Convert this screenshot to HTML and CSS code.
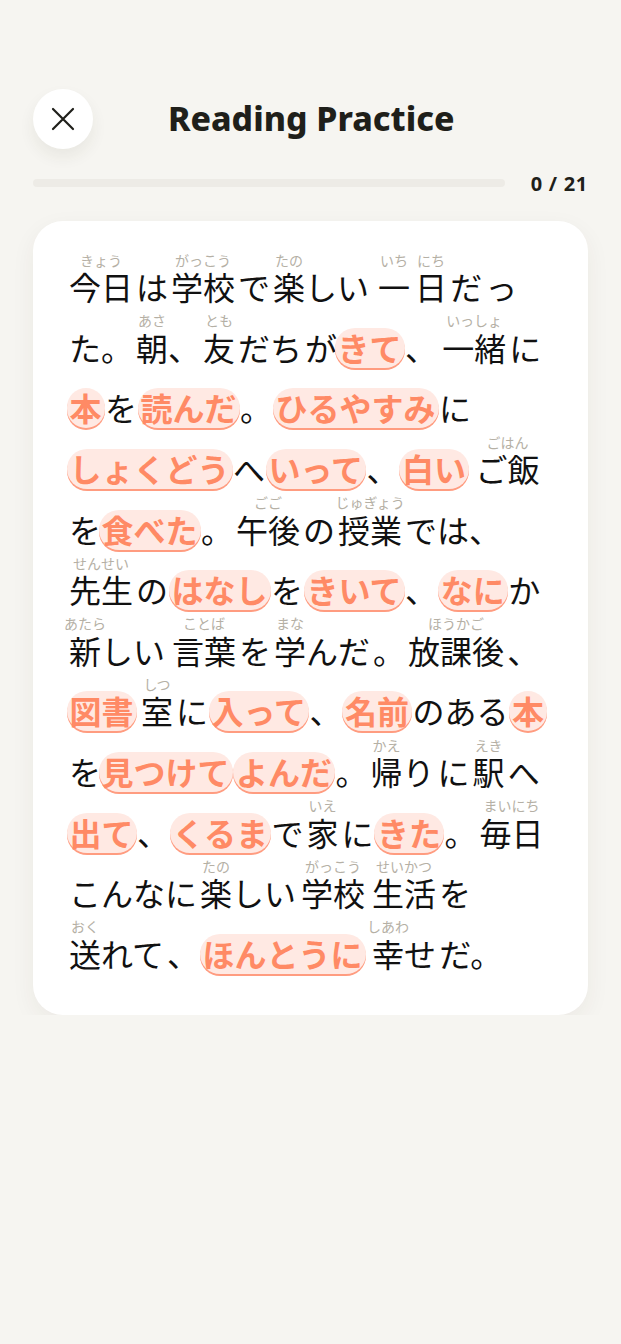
FILE: index.html
```html
<!DOCTYPE html>
<html lang="ja">
<head>
  <meta charset="utf-8">
  <title>Reading Practice</title>
  <link rel="stylesheet" href="styles.css">
</head>
<body>
<div class="page">
  <div class="header">
    <button class="closeBtn">
      <svg width="24" height="24" viewBox="0 0 24 24"><path d="M2 2L22 22M22 2L2 22" fill="none" stroke="#1f1f1a" stroke-width="2.2" stroke-linecap="round"/></svg>
    </button>
    <h1>Reading Practice</h1>
  </div>

  <div class="progress">
    <div class="track"></div>
    <span class="count">0 / 21</span>
  </div>

  <div class="card">
    <div class="line">
      <span class="w"><i>きょう</i>今日</span><span class="w">は</span><span class="w"><i>がっこう</i>学校</span><span class="w">で</span><span class="w"><b><i>たの</i>楽</b>しい</span><span class="w wide"><i>いち</i>一</span><span class="w near"><i>にち</i>日</span><span class="w">だ</span><span class="w">っ</span>
    </div>
    <div class="line">
      <span class="w">た。</span><span class="w"><b><i>あさ</i>朝</b>、</span><span class="w"><i>とも</i>友</span><span class="w">だち</span><span class="w">が</span><span class="w hl tight">きて</span><span class="w">、</span><span class="w near"><i>いっしょ</i>一緒</span><span class="w">に</span>
    </div>
    <div class="line">
      <span class="w hl">本</span><span class="w">を</span><span class="w hl">読んだ</span><span class="w">。</span><span class="w hl">ひるやすみ</span><span class="w">に</span>
    </div>
    <div class="line">
      <span class="w hl">しょくどう</span><span class="w">へ</span><span class="w hl">いって</span><span class="w">、</span><span class="w hl">白い</span><span class="w wide"><i>ごはん</i>ご飯</span>
    </div>
    <div class="line">
      <span class="w">を</span><span class="w hl tight">食べた</span><span class="w">。</span><span class="w"><i>ごご</i>午後</span><span class="w">の</span><span class="w"><i>じゅぎょう</i>授業</span><span class="w">では、</span>
    </div>
    <div class="line">
      <span class="w"><i>せんせい</i>先生</span><span class="w">の</span><span class="w hl">はなし</span><span class="w">を</span><span class="w hl">きいて</span><span class="w">、</span><span class="w hl">なに</span><span class="w">か</span>
    </div>
    <div class="line">
      <span class="w"><b><i>あたら</i>新</b>しい</span><span class="w mid"><i>ことば</i>言葉</span><span class="w">を</span><span class="w"><b><i>まな</i>学</b>んだ</span><span class="w">。</span><span class="w"><i>ほうかご</i>放課後</span><span class="w">、</span>
    </div>
    <div class="line">
      <span class="w hl">図書</span><span class="w mid"><i>しつ</i>室</span><span class="w">に</span><span class="w hl">入って</span><span class="w">、</span><span class="w hl">名前</span><span class="w">のある</span><span class="w hl">本</span>
    </div>
    <div class="line">
      <span class="w">を</span><span class="w hl tight">見つけて</span><span class="w hl">よんだ</span><span class="w">。</span><span class="w"><b><i>かえ</i>帰</b>り</span><span class="w">に</span><span class="w"><i>えき</i>駅</span><span class="w">へ</span>
    </div>
    <div class="line">
      <span class="w hl">出て</span><span class="w">、</span><span class="w hl">くるま</span><span class="w">で</span><span class="w"><i>いえ</i>家</span><span class="w">に</span><span class="w hl">きた</span><span class="w">。</span><span class="w"><i>まいにち</i>毎日</span>
    </div>
    <div class="line">
      <span class="w">こんなに</span><span class="w"><b><i>たの</i>楽</b>しい</span><span class="w near"><i>がっこう</i>学校</span><span class="w mid"><i>せいかつ</i>生活</span><span class="w">を</span>
    </div>
    <div class="line">
      <span class="w"><b><i>おく</i>送</b>れて</span><span class="w">、</span><span class="w hl">ほんとうに</span><span class="w wide"><b><i>しあわ</i>幸</b>せ</span><span class="w">だ。</span>
    </div>
  </div>
</div>
</body>
</html>
```

FILE: styles.css
```css
* {
  box-sizing: border-box;
}

body {
  margin: 0;
  background: #f6f5f1;
  font-family: "Noto Sans", "Noto Sans CJK JP", sans-serif;
  color: #1f1f1a;
}

.page {
  padding: 89px 33px 0 33px;
}

.header {
  display: flex;
  align-items: center;
  height: 60px;
}

.closeBtn {
  width: 60px;
  height: 60px;
  border: none;
  border-radius: 50%;
  background: white;
  box-shadow: 0 8px 16px rgba(60, 50, 30, 0.07);
  display: flex;
  align-items: center;
  justify-content: center;
  padding: 0;
}

h1 {
  margin: 0 0 2px 75px;
  font-size: 33.8px;
  font-weight: 800;
  line-height: 58px;
  white-space: nowrap;
}

.progress {
  display: flex;
  align-items: center;
  margin-top: 30px;
  height: 8px;
}

.track {
  flex: 1;
  height: 8px;
  border-radius: 4px;
  background: #edebe6;
}

.count {
  width: 83px;
  text-align: right;
  font-size: 20px;
  font-weight: 700;
  letter-spacing: 0.7px;
}

.card {
  margin-top: 34px;
  height: 794px;
  padding: 36px 0 0 36px;
  border-radius: 30px;
  background: white;
  box-shadow: 0 8px 24px rgba(60, 50, 30, 0.06);
  font-family: "Noto Sans CJK JP", sans-serif;
}

.line {
  display: flex;
  gap: 3px;
  height: 60.6px;
  align-items: center;
  font-size: 32px;
  color: #111;
}

.w {
  position: relative;
  white-space: nowrap;
  line-height: 38px;
  padding-bottom: 2px;
}

.w b {
  display: inline-block;
  position: relative;
  font-weight: 400;
}

.wide {
  margin-left: 6px;
}

.mid {
  margin-left: 4px;
}

.near {
  margin-left: 2px;
}

/* furigana sits over the word, does not push it */
.w i {
  position: absolute;
  top: -13.5px;
  left: 50%;
  transform: translateX(-50%);
  font-style: normal;
  font-size: 14px;
  line-height: 12px;
  color: #b5b0a5;
}

.hl {
  margin: 0 -2.5px;
  padding: 0 3px 2px 3px;
  border-radius: 20px;
  background: #ffe9e3;
  box-shadow: 0 2px 0 #ff9c80;
  color: #ff8a65;
  font-weight: 700;
}

.hl + .hl {
  margin-left: 0;
}

.hl.tight {
  margin-left: -5.5px;
}
```
